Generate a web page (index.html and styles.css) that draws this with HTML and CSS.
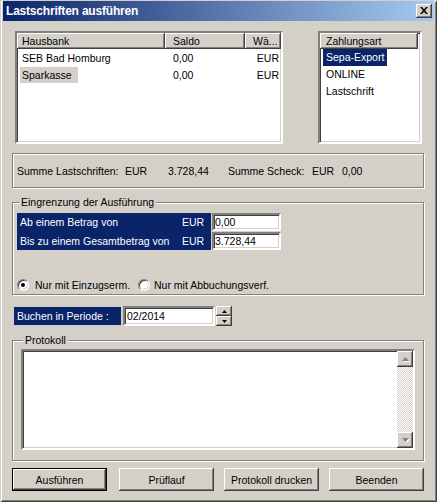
FILE: index.html
```html
<!DOCTYPE html>
<html lang="de">
<head>
<meta charset="utf-8">
<title>Lastschriften ausführen</title>
<link rel="stylesheet" href="styles.css">
</head>
<body>
<div class="window">
  <div class="titlebar">
    <span class="title">Lastschriften ausführen</span>
    <span class="closebtn">
      <svg width="8" height="7" viewBox="0 0 8 7"><path d="M0 0h2l2 2.2L6 0h2L5 3.5 8 7H6L4 4.8 2 7H0l3-3.5z" fill="#000"/></svg>
    </span>
  </div>
  <div class="main">
    <div class="toprow">
      <div class="listview bank">
        <div class="lvhead">
          <div class="hcell hc1">Hausbank</div>
          <div class="hcell hc2">Saldo</div>
          <div class="hcell hc3">Wä...</div>
        </div>
        <div class="lvrow">
          <div class="cell c1"><span class="item">SEB Bad Homburg</span></div>
          <div class="cell c2">0,00</div>
          <div class="cell c3">EUR</div>
        </div>
        <div class="lvrow">
          <div class="cell c1"><span class="item focus">Sparkasse</span></div>
          <div class="cell c2">0,00</div>
          <div class="cell c3">EUR</div>
        </div>
      </div>
      <div class="listview zahl">
        <div class="lvhead">
          <div class="hcell hz">Zahlungsart</div>
        </div>
        <div class="zrow"><span class="zitem selected">Sepa-Export</span></div>
        <div class="zrow"><span class="zitem">ONLINE</span></div>
        <div class="zrow"><span class="zitem">Lastschrift</span></div>
      </div>
    </div>

    <div class="summary">
      <span class="s1">Summe Lastschriften:</span>
      <span class="s2">EUR</span>
      <span class="s3">3.728,44</span>
      <span class="s4">Summe Scheck:</span>
      <span class="s5">EUR</span>
      <span class="s6">0,00</span>
    </div>

    <fieldset class="group limit">
      <legend>Eingrenzung der Ausführung</legend>
      <div class="limrows">
        <div class="limlabels">
          <div class="limlabel"><span class="lt">Ab einem Betrag von</span><span>EUR</span></div>
          <div class="limlabel"><span class="lt">Bis zu einem Gesamtbetrag von</span><span>EUR</span></div>
        </div>
        <div class="liminputs">
          <div class="edit">0,00</div>
          <div class="edit">3.728,44</div>
        </div>
      </div>
      <div class="radios">
        <div class="ropt r1"><span class="radio checked"></span><span class="rtext t1">Nur mit Einzugserm.</span></div>
        <div class="ropt r2"><span class="radio"></span><span class="rtext t2">Nur mit Abbuchungsverf.</span></div>
      </div>
    </fieldset>

    <div class="periode">
      <div class="plabel">Buchen in Periode :</div>
      <div class="edit pedit">02/2014</div>
      <div class="spinner">
        <span class="spbtn"><svg width="5" height="3" viewBox="0 0 5 3"><path d="M2.5 0L5 3H0z" fill="#000"/></svg></span>
        <span class="spbtn"><svg width="5" height="3" viewBox="0 0 5 3"><path d="M0 0h5L2.5 3z" fill="#000"/></svg></span>
      </div>
    </div>

    <fieldset class="group proto">
      <legend>Protokoll</legend>
      <div class="memo">
        <div class="memobody"></div>
        <div class="vscroll">
          <span class="sbtn"><svg width="7" height="5" viewBox="0 0 7 5"><path d="M4.5 1L8 5H1z" fill="#fff"/><path d="M3.5 0L7 4H0z" fill="#808080"/></svg></span>
          <span class="strack"></span>
          <span class="sbtn"><svg width="7" height="5" viewBox="0 0 7 5"><path d="M1 1h7L4.5 5z" fill="#fff"/><path d="M0 0h7L3.5 4z" fill="#808080"/></svg></span>
        </div>
      </div>
    </fieldset>

    <div class="buttons">
      <div class="btn default"><span>Ausführen</span></div>
      <div class="btn b2"><span>Prüflauf</span></div>
      <div class="btn b3"><span>Protokoll drucken</span></div>
      <div class="btn b4"><span>Beenden</span></div>
    </div>
  </div>
</div>
</body>
</html>
```

FILE: styles.css
```css
* { box-sizing: border-box; }
html, body { margin: 0; padding: 0; }
body {
  background: #d4d0c8;
  font-family: "Liberation Sans", Arial, sans-serif;
  font-size: 10.5px;
  color: #000;
}
.window {
  width: 437px;
  height: 502px;
  background: #d4d0c8;
  box-shadow: inset 1px 1px #d4d0c8, inset -1px -1px #404040, inset 2px 2px #fff, inset -2px -2px #808080;
  padding-top: 1px;
  overflow: hidden;
}
.titlebar {
  height: 20px;
  margin: 0 3px;
  display: flex;
  align-items: center;
  padding-left: 3px;
  background: linear-gradient(to right, #0a246a, #a6caf0);
}
.title {
  color: #fff;
  font-weight: bold;
  font-size: 12px;
  letter-spacing: -0.2px;
}
.closebtn {
  margin-left: auto;
  margin-right: 2px;
  width: 16px;
  height: 14px;
  background: #d4d0c8;
  box-shadow: inset -1px -1px #404040, inset 1px 1px #fff, inset -2px -2px #808080;
  display: flex;
  align-items: center;
  justify-content: center;
  padding-bottom: 1px;
}
.closebtn svg { display: block; }
.main { padding: 0 12px; }

/* sunken 3D edge */
.listview, .edit, .memo {
  background: #fff;
  border: 2px solid;
  border-color: #808080 #fff #fff #808080;
  box-shadow: inset 1px 1px #404040, inset -1px -1px #d4d0c8;
}
.toprow {
  display: flex;
  margin-top: 10px;
  height: 113px;
}
.listview { height: 113px; overflow: hidden; }
.bank { width: 268px; margin-left: 3px; }
.zahl { width: 104px; margin-left: auto; margin-right: 3px; }
.lvhead { display: flex; height: 16px; margin: 0; }
.hcell {
  height: 16px;
  line-height: 16px;
  background: #d4d0c8;
  box-shadow: inset -1px -1px #404040, inset 1px 1px #fff, inset -2px -2px #808080;
  padding-left: 5px;
  white-space: nowrap;
  overflow: hidden;
}
.hc1 { width: 148px; }
.hc2 { width: 80px; padding-left: 8px; }
.hc3 { width: 36px; padding-left: 8px; }
.hz { width: 98px; padding-left: 6px; }
.lvrow { display: flex; height: 17px; align-items: center; }
.cell { white-space: nowrap; }
.c1 { width: 148px; padding-left: 3px; }
.c2 { width: 80px; padding-left: 8px; }
.c3 { width: 36px; text-align: right; padding-right: 2px; }
.item { display: inline-block; height: 16px; line-height: 16px; padding: 0 6px 0 2px; }
.item.focus { background: #d4d0c8; }
.zrow { height: 17px; display: flex; align-items: center; padding-left: 3px; }
.zitem { display: inline-block; height: 17px; line-height: 17px; padding: 0 3px; }
.zitem.selected { background: #0a246a; color: #fff; }

/* etched frames */
.summary {
  margin-top: 9px;
  width: 412px;
  height: 35px;
  border: 1px solid #808080;
  box-shadow: inset 1px 1px #fff, 1px 1px #fff;
  display: flex;
  align-items: center;
  padding-left: 4px;
  padding-top: 1px;
  white-space: nowrap;
}
.s1 { width: 108px; }
.s2 { width: 43px; }
.s3 { width: 60px; }
.s4 { width: 84px; }
.s5 { width: 30px; }

.group {
  width: 412px;
  margin: 0;
  border: 1px solid #808080;
  box-shadow: inset 1px 1px #fff, 1px 1px #fff;
  min-width: 0;
}
.group legend {
  line-height: 13px;
  padding: 0 2px;
  margin-left: 2px;
  background: #d4d0c8;
}
.limit { margin-top: 8px; padding: 4px 0 3px 4px; }
.limrows { display: flex; }
.limlabels {
  width: 194px;
  background: #0a246a;
  color: #fff;
  display: flex;
  flex-direction: column;
  gap: 1px;
}
.limlabel { height: 18px; display: flex; align-items: center; padding-left: 3px; white-space: nowrap; }
.lt { width: 162px; }
.liminputs { display: flex; flex-direction: column; gap: 1px; margin-left: 1px; }
.edit {
  width: 69px;
  height: 18px;
  line-height: 14px;
  padding-left: 1px;
  white-space: nowrap;
}
.radios { display: flex; height: 13px; align-items: center; margin-top: 28px; }
.ropt { display: flex; align-items: center; }
.r1 { width: 121px; }
.radio {
  width: 12px;
  height: 12px;
  border-radius: 50%;
  border: 1px solid;
  border-color: #808080 #fff #fff #808080;
  box-shadow: inset 1px 1px #404040, inset -1px -1px #d4d0c8;
  background: #fff;
  position: relative;
  flex: none;
}
.radio.checked::after {
  content: "";
  position: absolute;
  left: 3px;
  top: 3px;
  width: 4px;
  height: 4px;
  border-radius: 50%;
  background: #000;
}
.t1 { margin-left: 6px; }
.t2 { margin-left: 4px; }

.periode { display: flex; margin-top: 11px; height: 20px; }
.plabel {
  margin: 1px 0 0 2px;
  width: 107px;
  height: 18px;
  background: #0a246a;
  color: #fff;
  padding-left: 3px;
  line-height: 18px;
  white-space: nowrap;
}
.pedit { width: 92px; height: 20px; margin-left: 2px; line-height: 16px; padding-left: 2px; }
.spinner { display: flex; flex-direction: column; margin-left: 1px; width: 16px; }
.spbtn {
  height: 10px;
  background: #d4d0c8;
  box-shadow: inset -1px -1px #404040, inset 1px 1px #fff, inset -2px -2px #808080;
  display: flex;
  align-items: center;
  justify-content: center;
}
.spbtn svg { display: block; }

.proto { margin-top: 8px; padding: 2px 0 10px 8px; }
.memo {
  width: 394px;
  height: 101px;
  display: flex;
}
.memobody { flex: 1; }
.vscroll { width: 16px; display: flex; flex-direction: column; }
.sbtn {
  height: 16px;
  background: #d4d0c8;
  box-shadow: inset -1px -1px #404040, inset 1px 1px #fff, inset -2px -2px #808080, inset 2px 2px #d4d0c8;
  display: flex;
  align-items: center;
  justify-content: center;
  flex: none;
}
.sbtn svg { display: block; overflow: visible; }
.strack {
  flex: 1;
  background-color: #fff;
  background-image: repeating-conic-gradient(#d4d0c8 0 25%, #fff 0 50%);
  background-size: 2px 2px;
}

.buttons { display: flex; margin-top: 7px; }
.btn {
  width: 95px;
  height: 23px;
  background: #d4d0c8;
  box-shadow: inset -1px -1px #404040, inset 1px 1px #fff, inset -2px -2px #808080;
  display: flex;
  align-items: center;
  justify-content: center;
  white-space: nowrap;
}
.btn.default {
  border: 1px solid #000;
}
.b2 { margin-left: 12px; }
.b3 { margin-left: 10px; }
.b4 { margin-left: 10px; }
```
